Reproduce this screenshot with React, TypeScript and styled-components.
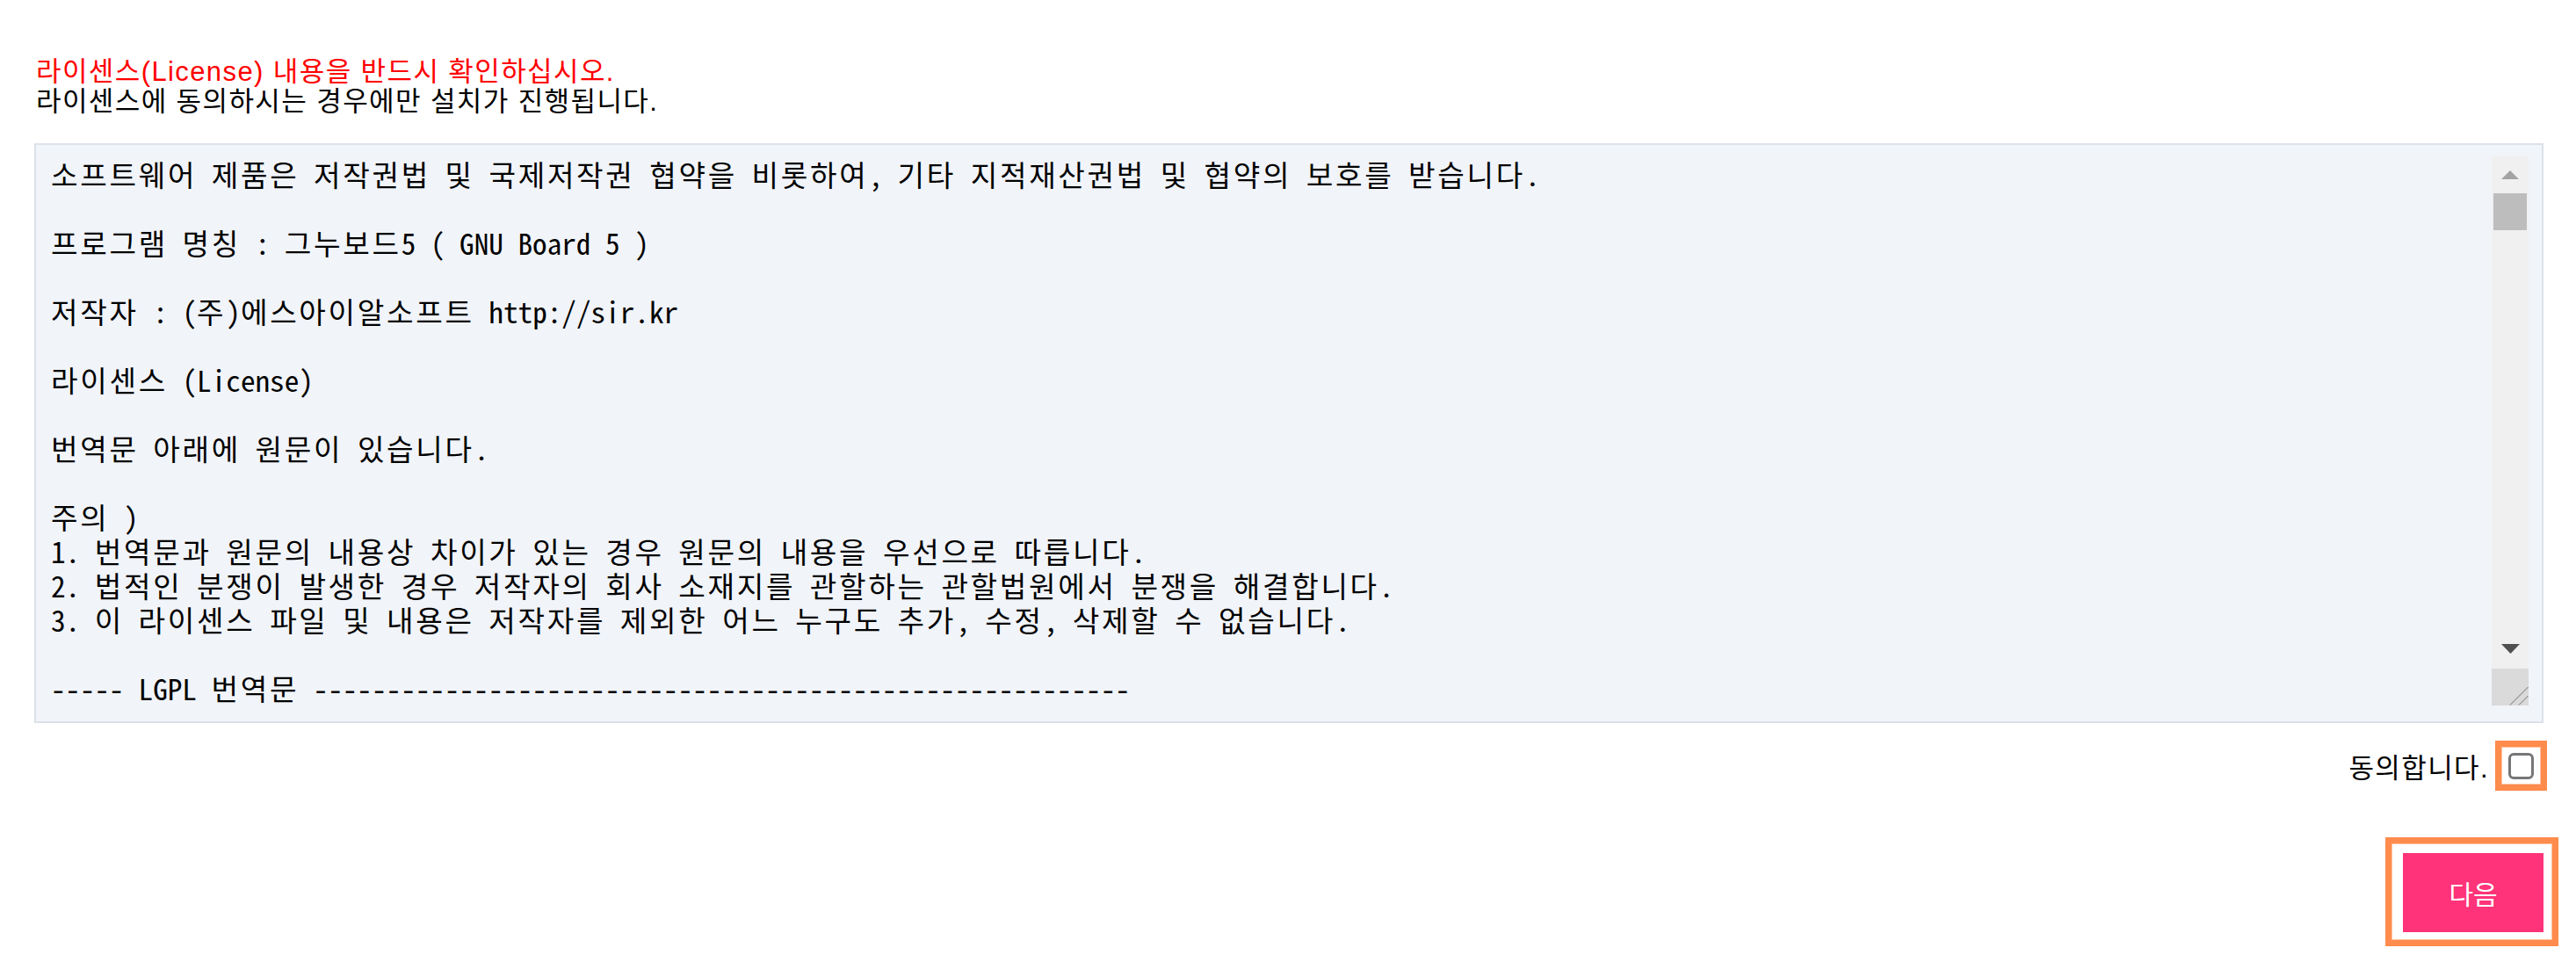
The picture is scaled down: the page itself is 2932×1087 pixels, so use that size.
import styled, { createGlobalStyle } from "styled-components";

const GlobalStyle = createGlobalStyle`
  html, body {
    margin: 0;
    padding: 0;
    background: #fff;
  }
  body {
    font-family: "Liberation Sans", "Noto Sans CJK KR", sans-serif;
  }
`;

const Page = styled.div`
  display: flex;
  flex-direction: column;
  padding: 65px 37px 0 39px;
`;

const Notice = styled.div`
  padding-left: 2px;
  font-size: 31px;
  line-height: 34px;
  letter-spacing: 1.4px;
`;

const NoticeLine = styled.p<{ $warn?: boolean }>`
  margin: 0;
  color: ${(p) => (p.$warn ? "#ff0000" : "#000")};
`;

const LicenseBox = styled.div`
  display: flex;
  margin-top: 30px;
  padding: 13px 15px 18px 15px;
  border: 2px solid #dce2e9;
  background: #f1f4f9;
`;

const LicenseText = styled.div`
  flex: 1;
  height: 625px;
  padding-left: 2px;
  color: #000;
  font-family: "Noto Sans Mono CJK KR", "Noto Sans CJK KR", monospace;
  font-size: 33.2px;
  line-height: 39px;
  white-space: pre;
`;

const TextLine = styled.div`
  height: 39px;
`;

const Hangul = styled.span`
  display: inline-block;
  line-height: 39px;
  letter-spacing: 2.7px;
`;

const ScrollBar = styled.div`
  display: flex;
  flex-direction: column;
  width: 42px;
  background: #f0f0f0;
`;

const ScrollButton = styled.div<{ $top: number }>`
  display: flex;
  justify-content: center;
  align-items: flex-start;
  height: 42px;
  padding-top: ${(p) => p.$top}px;
  box-sizing: border-box;
  svg {
    display: block;
  }
`;

const Track = styled.div`
  flex: 1;
  padding: 0 2px;
`;

const Thumb = styled.div`
  height: 42px;
  background: #bdbdbd;
`;

const Resizer = styled.div`
  height: 42px;
  background: #dadada;
  svg {
    display: block;
  }
`;

const AgreeRow = styled.label`
  display: flex;
  align-items: center;
  justify-content: flex-end;
  gap: 7px;
  margin: 20px -4px 0 0;
  font-size: 31px;
  letter-spacing: 1.4px;
  color: #000;
`;

const Highlight = styled.span<{ $pad: string }>`
  display: inline-flex;
  padding: ${(p) => p.$pad};
  border: 7px solid #ff8b4c;
  box-shadow: inset 0 0 0 1px #ffc3a0;
  background: #fff;
`;

const Check = styled.input`
  appearance: none;
  box-sizing: border-box;
  width: 29px;
  height: 30px;
  margin: 0;
  border: 3px solid #767676;
  border-radius: 6px;
  background: #fff;
`;

const ButtonRow = styled.div`
  display: flex;
  justify-content: flex-end;
  margin: 53px -17px 0 0;
`;

const NextButton = styled.button`
  width: 160px;
  height: 90px;
  border: 0;
  background: #ff3379;
  color: #fff;
  font-family: "Liberation Sans", "Noto Sans CJK KR", sans-serif;
  font-size: 30px;
  cursor: pointer;
`;

const licenseLines = [
  "소프트웨어 제품은 저작권법 및 국제저작권 협약을 비롯하여, 기타 지적재산권법 및 협약의 보호를 받습니다.",
  "",
  "프로그램 명칭 : 그누보드5 ( GNU Board 5 )",
  "",
  "저작자 : (주)에스아이알소프트 http://sir.kr",
  "",
  "라이센스 (License)",
  "",
  "번역문 아래에 원문이 있습니다.",
  "",
  "주의 )",
  "1. 번역문과 원문의 내용상 차이가 있는 경우 원문의 내용을 우선으로 따릅니다.",
  "2. 법적인 분쟁이 발생한 경우 저작자의 회사 소재지를 관할하는 관할법원에서 분쟁을 해결합니다.",
  "3. 이 라이센스 파일 및 내용은 저작자를 제외한 어느 누구도 추가, 수정, 삭제할 수 없습니다.",
  "",
  "----- LGPL 번역문 " + "-".repeat(56),
];

function renderLine(line: string) {
  return line
    .split(/([\uAC00-\uD7A3]+)/)
    .map((part, i) => (i % 2 === 1 ? <Hangul key={i}>{part}</Hangul> : part));
}

function LicenseScrollBar() {
  return (
    <ScrollBar>
      <ScrollButton $top={16}>
        <svg width="20" height="10" viewBox="0 0 20 10">
          <polygon points="0,10 20,10 10,0" fill="#a3a3a3" />
        </svg>
      </ScrollButton>
      <Track>
        <Thumb />
      </Track>
      <ScrollButton $top={14}>
        <svg width="21" height="11" viewBox="0 0 21 11">
          <polygon points="0,0 21,0 10.5,11" fill="#505050" />
        </svg>
      </ScrollButton>
      <Resizer>
        <svg width="42" height="42" viewBox="0 0 42 42">
          <line x1="21" y1="41.5" x2="41.5" y2="21" stroke="#707070" strokeWidth="1" />
          <line x1="31" y1="41.5" x2="41.5" y2="31" stroke="#707070" strokeWidth="1" />
        </svg>
      </Resizer>
    </ScrollBar>
  );
}

export default function App() {
  return (
    <>
      <GlobalStyle />
      <Page>
        <Notice>
          <NoticeLine $warn>라이센스(License) 내용을 반드시 확인하십시오.</NoticeLine>
          <NoticeLine>라이센스에 동의하시는 경우에만 설치가 진행됩니다.</NoticeLine>
        </Notice>
        <LicenseBox>
          <LicenseText role="textbox" aria-readonly="true" aria-multiline="true">
            {licenseLines.map((line, i) => (
              <TextLine key={i}>{renderLine(line)}</TextLine>
            ))}
          </LicenseText>
          <LicenseScrollBar />
        </LicenseBox>
        <AgreeRow>
          동의합니다.
          <Highlight $pad="7px 8px 6px 8px">
            <Check type="checkbox" />
          </Highlight>
        </AgreeRow>
        <ButtonRow>
          <Highlight $pad="11px 10px 9px 13px">
            <NextButton type="button">다음</NextButton>
          </Highlight>
        </ButtonRow>
      </Page>
    </>
  );
}
